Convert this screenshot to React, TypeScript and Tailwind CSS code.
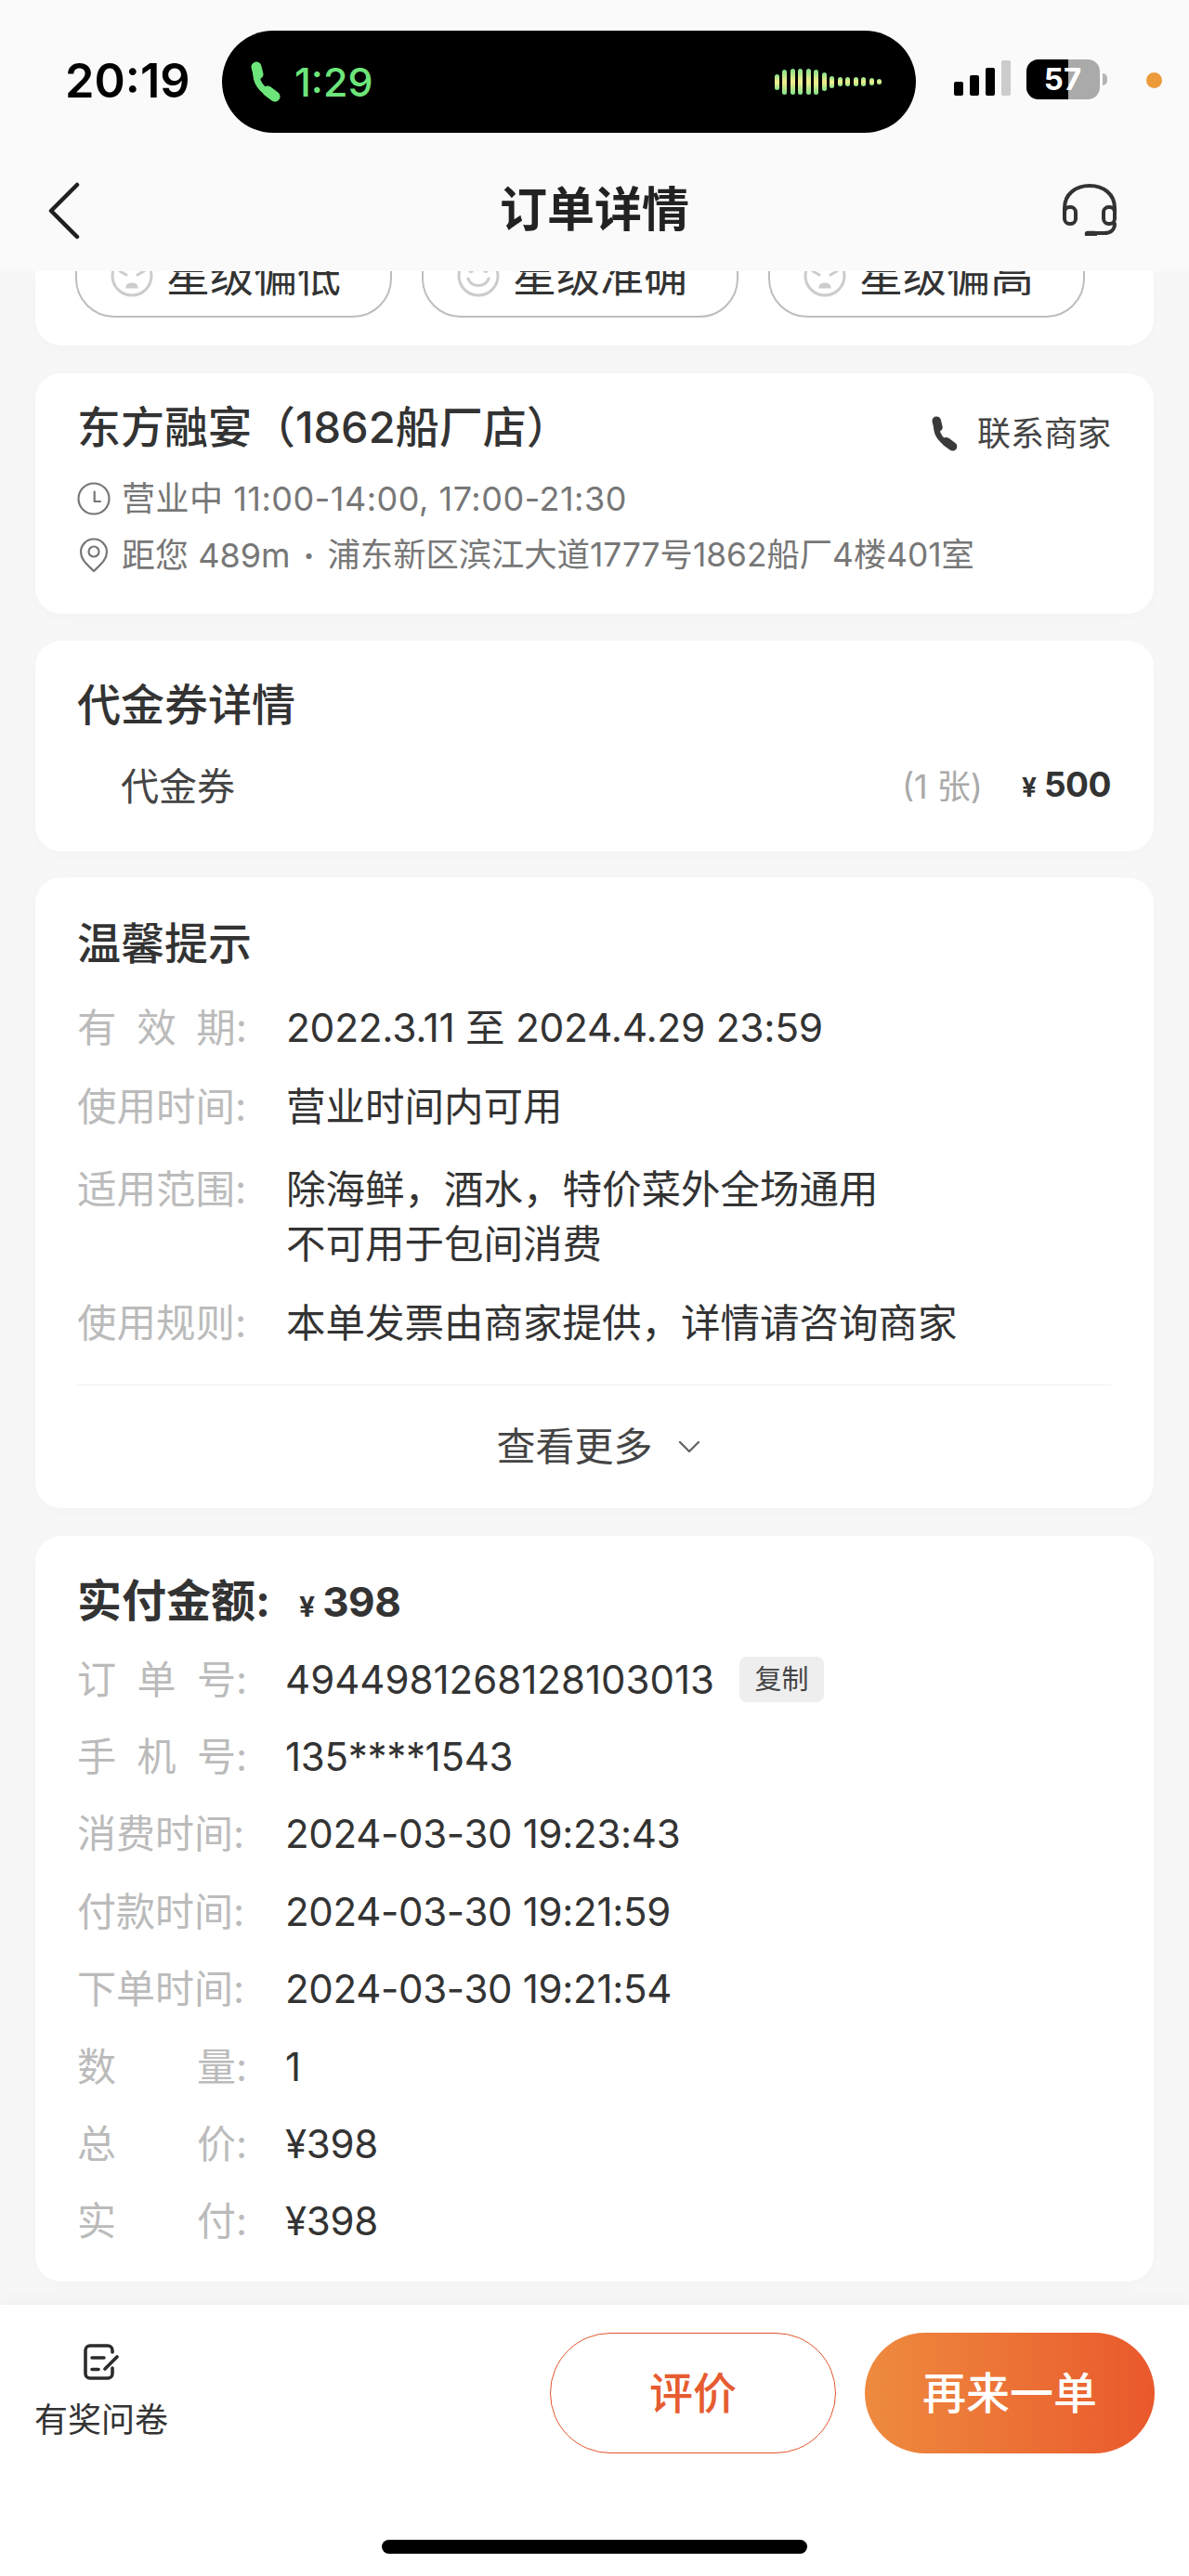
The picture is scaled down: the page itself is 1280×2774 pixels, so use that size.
const bars = [17, 27, 28, 28, 28, 27, 20, 13, 10, 10, 10, 10, 8, 6];

function PhoneGlyph({ className }: { className: string }) {
  return (
    <svg viewBox="0 0 34 44" fill="none" stroke="currentColor" strokeLinecap="round" className={className}>
      <path d="M8 8C6 22 14 33 28 37" strokeWidth="7" />
      <path d="M8 6L10 14" strokeWidth="11" />
      <path d="M20 32L28 38" strokeWidth="11" />
    </svg>
  );
}

function Face({ kind }: { kind: 'low' | 'ok' | 'high' }) {
  return (
    <svg viewBox="0 0 46 46" fill="none" stroke="#cccccc" strokeWidth="3" strokeLinecap="round" className="w-[46px] h-[46px] shrink-0">
      <circle cx="23" cy="23" r="21" />
      {kind === 'ok' ? (
        <>
          <circle cx="15" cy="17" r="1.5" fill="#cccccc" />
          <circle cx="31" cy="17" r="1.5" fill="#cccccc" />
          <path d="M12 26C15 36 31 36 34 26" />
        </>
      ) : (
        <>
          <path d="M10 18L17 22M36 18L29 22" />
          <path d="M18 35C19 31 27 31 28 35Z" fill="#cccccc" />
        </>
      )}
    </svg>
  );
}

function RateButton({ kind, text }: { kind: 'low' | 'ok' | 'high'; text: string }) {
  return (
    <div className="w-[341px] h-[90px] shrink-0 flex items-center gap-[14px] pl-[36px] rounded-[42px] border-2 border-[#bdbdbd] text-[47px] leading-[60px] text-[#333]">
      <Face kind={kind} />
      {text}
    </div>
  );
}

function Label({ parts }: { parts: string[] }) {
  return (
    <div className="w-[183px] shrink-0 flex justify-between text-[#bbbbbb]">
      {parts.map((p) => (
        <span key={p}>{p}</span>
      ))}
    </div>
  );
}

function InfoRow({ parts, value, extra }: { parts: string[]; value: string; extra?: boolean }) {
  return (
    <div className="h-[83.4px] flex items-center gap-[41px] text-[42px] leading-[60px] text-[#333]">
      <Label parts={parts} />
      {extra ? (
        <div className="flex items-center">
          {value}
          <span className="ml-[27px] w-[91px] h-[49px] flex items-center justify-center rounded-[8px] bg-[#eeeeee] text-[29px] text-[#444]">
            复制
          </span>
        </div>
      ) : (
        <div className="tracking-[-0.3px]">{value}</div>
      )}
    </div>
  );
}

export default function App() {
  return (
    <div className="w-[1280px] h-[2774px] flex flex-col overflow-hidden bg-[#f7f7f7] font-['Inter','Noto_Sans_CJK_SC',sans-serif] text-[#333]">
      <header className="h-[292px] shrink-0 bg-[#fafafa]">
        <div className="h-[176px] flex items-start">
          <div className="w-[239px] pt-[53px] pl-[70px] text-[50.5px] leading-[68px] font-semibold text-black">
            20:19
          </div>
          <div className="mt-[33px] w-[747px] h-[110px] rounded-[55px] bg-black flex items-center justify-between pl-[29px] pr-[37px]">
            <div className="flex items-center gap-[15px] text-[#6de57b] text-[43px] leading-[56px] font-medium">
              <PhoneGlyph className="w-[34px] h-[44px]" />
              1:29
            </div>
            <div className="flex items-center gap-[3.5px]">
              {bars.map((h, i) => (
                <div
                  key={i}
                  className="w-[5px] rounded-full bg-gradient-to-b from-[#7fe08a] via-[#f4ee8c] to-[#7fe08a]"
                  style={{ height: h }}
                />
              ))}
            </div>
          </div>
          <div className="mt-[64px] ml-[41px] flex items-end gap-[7px] h-[41px] pb-[2px]">
            <div className="w-[10px] h-[15px] rounded-[2px] bg-black" />
            <div className="w-[10px] h-[22px] rounded-[2px] bg-black" />
            <div className="w-[10px] h-[30px] rounded-[2px] bg-black" />
            <div className="w-[10px] h-[38px] rounded-[2px] bg-[#cccccc]" />
          </div>
          <div className="relative mt-[64px] ml-[17px] w-[79px] h-[43px] rounded-[13px] overflow-hidden bg-[#aaaaaa] flex items-center justify-center text-[33px] font-bold text-white">
            <div className="absolute inset-y-0 left-0 w-[45px] bg-black" />
            <span className="relative -ml-[1px]">57</span>
          </div>
          <div className="mt-[79px] ml-[3px] w-[5px] h-[13px] rounded-r-full bg-[#b5b5b5]" />
          <div className="mt-[78px] ml-[42px] w-[17px] h-[17px] rounded-full bg-[#ec9a3a]" />
        </div>
        <div className="relative h-[100px] flex items-start justify-center">
          <svg viewBox="0 0 36 62" fill="none" stroke="#1f1f1f" strokeWidth="4.5" strokeLinecap="round" strokeLinejoin="round" className="absolute left-[51px] top-[20px] w-[36px] h-[62px]">
            <path d="M32 3L4 31L32 59" />
          </svg>
          <h1 className="mt-[25px] text-[51px] leading-[50px] font-bold text-[#222]">订单详情</h1>
          <svg viewBox="0 0 60 56" fill="none" stroke="#333" strokeWidth="4" strokeLinecap="round" className="absolute left-[1143px] top-[22px] w-[60px] h-[56px]">
            <path d="M3 30V26C3 11 15 2 30 2S57 11 57 26V30" />
            <rect x="3" y="25" width="12" height="18" rx="5.5" />
            <rect x="45" y="25" width="12" height="18" rx="5.5" />
            <path d="M57 43C57 50 52 53 46 53H36" />
            <path d="M28 54H35" strokeWidth="6.5" />
          </svg>
        </div>
      </header>

      <main className="flex-1 min-h-0 overflow-hidden px-[38px]">
        <section className="h-[80px] flex items-end gap-[32px] overflow-hidden rounded-b-[28px] bg-white pl-[43px] pb-[30px] shadow-[0_4px_16px_rgba(0,0,0,0.02)]">
          <RateButton kind="low" text="星级偏低" />
          <RateButton kind="ok" text="星级准确" />
          <RateButton kind="high" text="星级偏高" />
        </section>

        <section className="mt-[30px] h-[259px] rounded-[28px] bg-white pl-[45px] pr-[46px] pt-[26px] shadow-[0_4px_16px_rgba(0,0,0,0.02)]">
          <div className="flex items-center justify-between">
            <h2 className="text-[47px] leading-[60px] font-medium text-[#333]">东方融宴（1862船厂店）</h2>
            <div className="mt-[14px] flex items-center gap-[20px] text-[36px] leading-[50px] text-[#444]">
              <PhoneGlyph className="w-[32px] h-[38px] text-[#3a3a3a]" />
              联系商家
            </div>
          </div>
          <div className="mt-[20px] flex items-center gap-[12px] text-[36px] leading-[50px] text-[#777]">
            <svg viewBox="0 0 36 36" fill="none" stroke="#777" strokeWidth="2.2" strokeLinecap="round" strokeLinejoin="round" className="w-[36px] h-[36px]">
              <circle cx="18" cy="18" r="16.5" />
              <path d="M18.7 10.5V21H25" />
            </svg>
            <span className="tracking-[0.5px]">营业中 11:00-14:00, 17:00-21:30</span>
          </div>
          <div className="mt-[11px] flex items-center text-[36px] leading-[50px] text-[#777]">
            <svg viewBox="0 0 36 38" fill="none" stroke="#777" strokeWidth="2.2" strokeLinejoin="round" className="w-[36px] h-[38px]">
              <path d="M18 36C12 30 4 24 4 15.5A14 14 0 0 1 32 15.5C32 24 24 30 18 36Z" />
              <circle cx="18" cy="15" r="5.5" />
            </svg>
            <span className="ml-[12px]">距您 489m</span>
            <span className="mx-[14px] font-bold">·</span>
            <span className="text-[35.3px]">浦东新区滨江大道1777号1862船厂4楼401室</span>
          </div>
        </section>

        <section className="mt-[29px] h-[227px] rounded-[28px] bg-white pl-[45px] pr-[46px] pt-[39px] shadow-[0_4px_16px_rgba(0,0,0,0.02)]">
          <h2 className="text-[47px] leading-[60px] font-medium text-[#333]">代金券详情</h2>
          <div className="mt-[26px] flex items-center justify-between pl-[47px] leading-[60px]">
            <span className="text-[41px] text-[#444]">代金券</span>
            <div className="flex items-center gap-[42px]">
              <span className="text-[36px] text-[#aaaaaa]">(1 张)</span>
              <span className="flex items-baseline gap-[8px] font-bold text-[#333]">
                <span className="text-[28px]">¥</span>
                <span className="text-[37px] tracking-[-0.5px]">500</span>
              </span>
            </div>
          </div>
        </section>

        <section className="mt-[28px] h-[679px] rounded-[28px] bg-white pl-[45px] pr-[46px] pt-[41px] shadow-[0_4px_16px_rgba(0,0,0,0.02)]">
          <h2 className="text-[47px] leading-[60px] font-medium text-[#333]">温馨提示</h2>
          <div className="text-[42.5px] leading-[60px] text-[#333]">
            <div className="mt-[31px] flex gap-[42px]">
              <Label parts={['有', '效', '期:']} />
              <span className="tracking-[-0.3px]">2022.3.11 至 2024.4.29 23:59</span>
            </div>
            <div className="mt-[25px] flex gap-[42px]">
              <Label parts={['使用时间:']} />
              <span>营业时间内可用</span>
            </div>
            <div className="mt-[29px] flex gap-[42px] leading-[59px]">
              <Label parts={['适用范围:']} />
              <div>
                除海鲜，酒水，特价菜外全场通用
                <br />
                不可用于包间消费
              </div>
            </div>
            <div className="mt-[26px] flex gap-[42px]">
              <Label parts={['使用规则:']} />
              <span>本单发票由商家提供，详情请咨询商家</span>
            </div>
          </div>
          <div className="mt-[36px] h-[1px] bg-[#f0f0f0]" />
          <div className="h-[131px] flex items-center justify-center gap-[26px] pl-[10px] text-[42px] text-[#444]">
            查看更多
            <svg viewBox="0 0 26 16" fill="none" stroke="#666" strokeWidth="2.4" strokeLinecap="round" strokeLinejoin="round" className="w-[26px] h-[16px]">
              <path d="M3 3L13 13L23 3" />
            </svg>
          </div>
        </section>

        <section className="mt-[30px] h-[803px] rounded-[28px] bg-white pl-[45px] pr-[46px] pt-[40px] shadow-[0_4px_16px_rgba(0,0,0,0.02)]">
          <div className="h-[60px] flex items-baseline text-[#333] font-bold leading-[60px]">
            <span className="text-[48px]">实付金额:</span>
            <span className="ml-[31px] text-[30px]">¥</span>
            <span className="ml-[8px] text-[44px] tracking-[-0.5px]">398</span>
          </div>
          <div className="mt-[13px]">
            <InfoRow parts={['订', '单', '号:']} value="4944981268128103013" extra />
            <InfoRow parts={['手', '机', '号:']} value="135****1543" />
            <InfoRow parts={['消费时间:']} value="2024-03-30 19:23:43" />
            <InfoRow parts={['付款时间:']} value="2024-03-30 19:21:59" />
            <InfoRow parts={['下单时间:']} value="2024-03-30 19:21:54" />
            <InfoRow parts={['数', '量:']} value="1" />
            <InfoRow parts={['总', '价:']} value="¥398" />
            <InfoRow parts={['实', '付:']} value="¥398" />
          </div>
        </section>
      </main>

      <footer className="relative h-[292px] shrink-0 bg-white shadow-[0_-6px_16px_rgba(0,0,0,0.03)]">
        <div className="flex items-start pt-[30px] pr-[37px]">
          <div className="w-[218px] flex flex-col items-center pt-[12px] text-[36px] leading-[50px] text-[#333]">
            <svg viewBox="0 0 40 40" fill="none" stroke="#2b2b2b" strokeWidth="3.6" strokeLinecap="round" className="w-[40px] h-[40px]">
              <path d="M32 9V7A5 5 0 0 0 27 2H8A5 5 0 0 0 3 7V32A5 5 0 0 0 8 37H27A5 5 0 0 0 32 32V26" />
              <path d="M10 15H23M10 27.5H17M37 14L24 27" />
            </svg>
            <span className="mt-[17px]">有奖问卷</span>
          </div>
          <div className="ml-auto flex gap-[31px] leading-[60px]">
            <div className="w-[308px] h-[130px] flex items-center justify-center rounded-[65px] border border-[#e2552d] bg-white text-[47px] font-medium text-[#e65c30]">
              评价
            </div>
            <div className="w-[312px] h-[130px] flex items-center justify-center rounded-[65px] bg-gradient-to-r from-[#ee8a3f] to-[#e9582c] text-[47px] font-medium text-white">
              再来一单
            </div>
          </div>
        </div>
        <div className="absolute left-[411px] bottom-[24px] w-[458px] h-[15px] rounded-full bg-black" />
      </footer>
    </div>
  );
}
